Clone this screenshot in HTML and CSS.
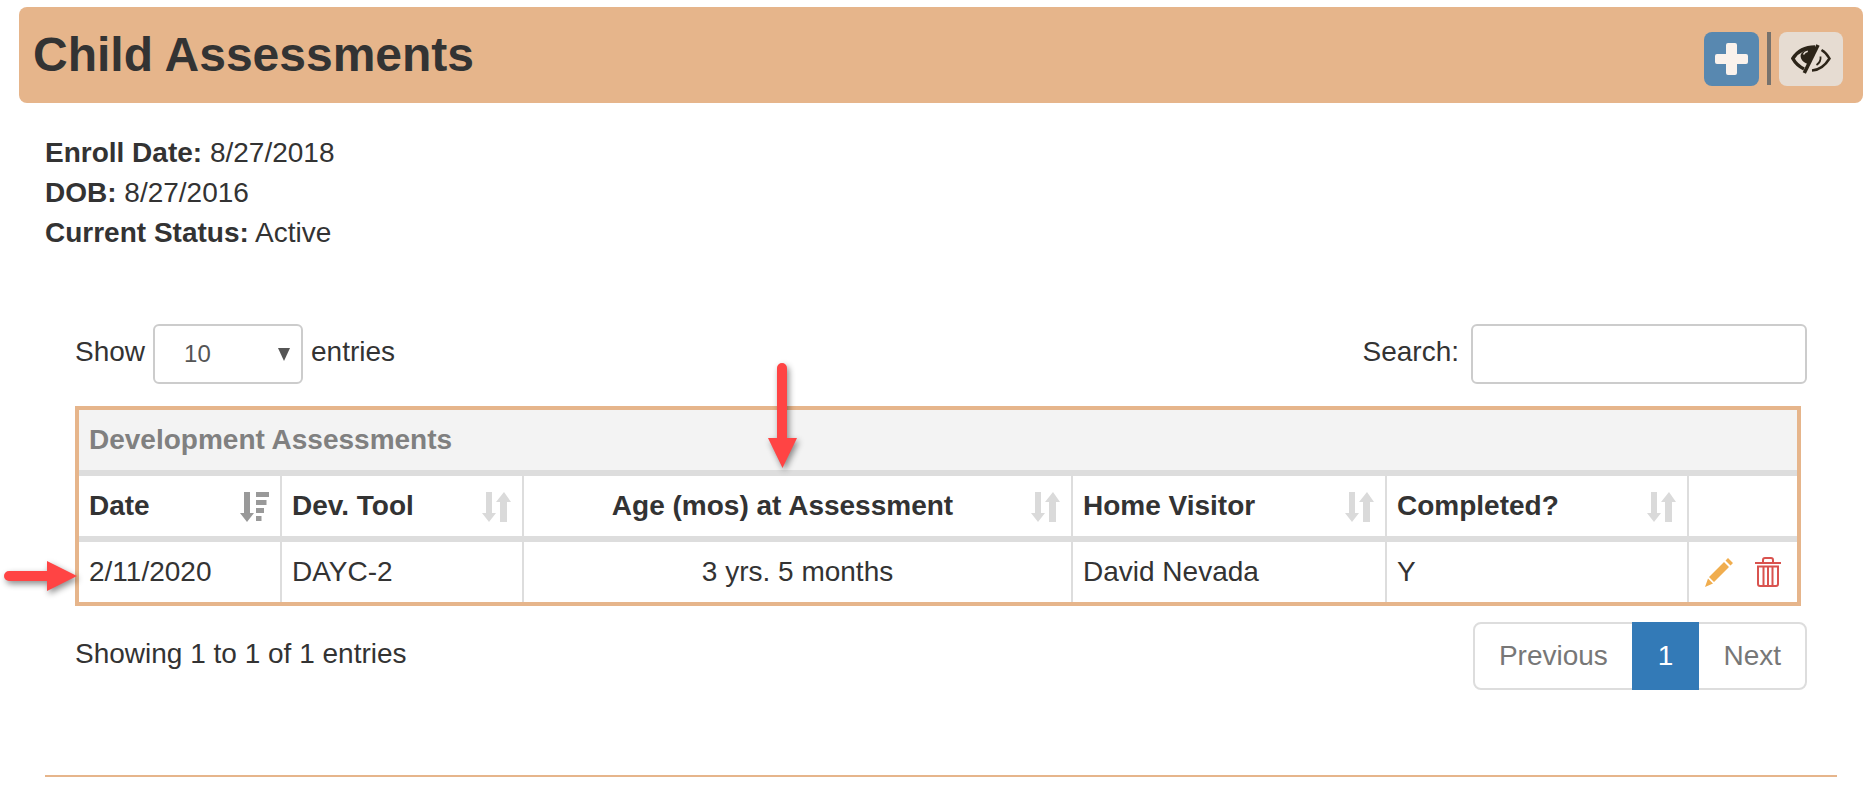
FILE: index.html
```html
<!DOCTYPE html>
<html lang="en">
<head>
<meta charset="utf-8">
<title>Child Assessments</title>
<link rel="stylesheet" href="styles.css">
</head>
<body>
<div class="page">
  <header class="banner">
    <h1 class="banner-title">Child Assessments</h1>
    <div class="banner-actions">
      <button class="action action-add" type="button" aria-label="Add">
        <svg class="plus-icon" viewBox="0 0 33 32"><path d="M13 0h7a2 2 0 0 1 2 2v9h9a2 2 0 0 1 2 2v6a2 2 0 0 1-2 2h-9v9a2 2 0 0 1-2 2h-7a2 2 0 0 1-2-2v-9H2a2 2 0 0 1-2-2v-6a2 2 0 0 1 2-2h9V2a2 2 0 0 1 2-2z"/></svg>
      </button>
      <span class="action-sep"></span>
      <button class="action action-hide" type="button" aria-label="Hide">
        <svg class="eye-icon" viewBox="0 0 40 30">
          <path class="eye-thick" d="M24 3C14 3 6 8 1.800 14.500 4 18.500 8 22.500 13 25"/>
          <path class="eye-fill" d="M9.700 11C11 7 17 3.500 24.500 3.500L17.300 20C12.500 19 9 15 9.700 11z"/>
          <path class="eye-glint" d="M12.500 10.500C13.200 9 14.800 7.800 16.800 7.300"/>
          <path class="eye-slash" d="M27 1 13.300 29"/>
          <path class="eye-outer" d="M21 26.500C29 26 34.500 21 38.500 14.500 36.500 11 34 8 30.500 6"/>
          <path class="eye-inner" d="M25.500 21C28.500 19 30 16.500 29.500 12.500"/>
        </svg>
      </button>
    </div>
  </header>

  <section class="info">
    <div><strong>Enroll Date:</strong> 8/27/2018</div>
    <div><strong>DOB:</strong> 8/27/2016</div>
    <div><strong>Current Status:</strong> Active</div>
  </section>

  <section class="dt">
    <div class="dt-controls">
      <div class="dt-length">
        <span>Show</span>
        <div class="select"><span class="select-value">10</span><span class="select-caret"></span></div>
        <span>entries</span>
      </div>
      <div class="dt-search">
        <span>Search:</span>
        <input class="search-input" type="text" aria-label="Search">
      </div>
    </div>

    <div class="table-frame">
      <table class="grid">
        <colgroup>
          <col class="c-date"><col class="c-tool"><col class="c-age"><col class="c-visitor"><col class="c-done"><col class="c-actions">
        </colgroup>
        <thead>
          <tr><th class="caption-cell" colspan="6">Development Assessments</th></tr>
          <tr>
            <th class="sortable">Date
              <svg class="sort sort-active" viewBox="0 0 29 30"><path d="M4 0h6v21h4l-7 9-7-9h4z"/><path d="M16 0h13v5H16zM16 8h10.500v5H16zM16 16h8v5h-8zM16 24h5.500v5H16z"/></svg>
            </th>
            <th class="sortable">Dev. Tool
              <svg class="sort" viewBox="0 0 29 30"><path d="M4 0h6v21h4l-7 9-7-9h4zM22 0l7 10h-4v20h-7V10h-4z"/></svg>
            </th>
            <th class="sortable centered">Age (mos) at Assessment
              <svg class="sort" viewBox="0 0 29 30"><path d="M4 0h6v21h4l-7 9-7-9h4zM22 0l7 10h-4v20h-7V10h-4z"/></svg>
            </th>
            <th class="sortable">Home Visitor
              <svg class="sort" viewBox="0 0 29 30"><path d="M4 0h6v21h4l-7 9-7-9h4zM22 0l7 10h-4v20h-7V10h-4z"/></svg>
            </th>
            <th class="sortable">Completed?
              <svg class="sort" viewBox="0 0 29 30"><path d="M4 0h6v21h4l-7 9-7-9h4zM22 0l7 10h-4v20h-7V10h-4z"/></svg>
            </th>
            <th class="last"></th>
          </tr>
        </thead>
        <tbody>
          <tr>
            <td>2/11/2020</td>
            <td>DAYC-2</td>
            <td class="centered">3 yrs. 5 months</td>
            <td>David Nevada</td>
            <td>Y</td>
            <td class="last">
              <div class="row-actions">
                <svg class="pencil" viewBox="0 0 28 29"><path d="M23 0l5 5-2.500 2.500-5-5zM19 4l5 5L9 24l-5-5zM3 20.500l5 5L0 29z"/></svg>
                <svg class="trash" viewBox="0 0 26 30">
                  <path class="trash-line" d="M0 6h26M8 6V3a2 2 0 0 1 2-2h6a2 2 0 0 1 2 2v3"/>
                  <path class="trash-line" d="M3 9.500h20V27a2 2 0 0 1-2 2H5a2 2 0 0 1-2-2zM8.500 10v18M13 10v18M17.500 10v18"/>
                </svg>
              </div>
            </td>
          </tr>
        </tbody>
      </table>
    </div>

    <div class="dt-footer">
      <div class="dt-info">Showing 1 to 1 of 1 entries</div>
      <nav class="pager">
        <a class="pager-item pager-first">Previous</a>
        <a class="pager-item pager-current">1</a>
        <a class="pager-item pager-last">Next</a>
      </nav>
    </div>
  </section>

  <hr class="rule">
</div>

<svg class="callout callout-down" viewBox="0 0 29 105"><path d="M9 5a5 5 0 0 1 10 0v70h10L14.500 105 0 75h9z"/></svg>
<svg class="callout callout-right" viewBox="0 0 73 30"><path d="M5 10h38V0l30 15-30 15V20H5a5 5 0 0 1 0-10z"/></svg>
</body>
</html>
```
FILE: styles.css
```css
* { box-sizing: border-box; }

html, body {
  margin: 0;
  background: #fff;
  overflow: hidden;
}

body {
  font-family: "Liberation Sans", Arial, sans-serif;
  font-size: 28px;
  line-height: 40px;
  color: #333;
  height: 801px;
}

.page {
  padding: 7px 10px 0 19px;
}

/* banner */
.banner {
  height: 96px;
  background: #e6b58b;
  border-radius: 8px;
  display: flex;
  align-items: flex-start;
  justify-content: space-between;
  padding: 25px 20px 0 14px;
}

.banner-title {
  margin: 0;
  font-size: 48px;
  line-height: 46px;
  font-weight: 700;
  color: #333;
}

.banner-actions {
  display: flex;
  gap: 8px;
  height: 54px;
}

.action {
  border: 0;
  padding: 0;
  height: 54px;
  border-radius: 8px;
  display: flex;
  align-items: center;
  justify-content: center;
}

.action-add { width: 55px; background: #5888b0; }
.action-hide { width: 64px; background: #e6dcd2; }

.action-sep {
  width: 4px;
  height: 53px;
  background: #77726d;
}

.plus-icon { width: 33px; height: 32px; fill: #faf2ec; }
.eye-icon { width: 40px; height: 30px; fill: none; stroke: #2c2418; }
.eye-thick { stroke-width: 3.400; }
.eye-outer { stroke-width: 2.500; }
.eye-inner { stroke-width: 1.800; }
.eye-slash { stroke-width: 3.600; }
.eye-fill { fill: #2c2418; stroke: none; }
.eye-glint { stroke: #e6dcd2; stroke-width: 1.600; }

/* summary */
.info {
  margin: 30px 0 0 26px;
}

.info strong { font-weight: 700; }

/* data table */
.dt {
  margin: 71px 0 0 56px;
  width: 1732px;
}

.dt-controls {
  display: flex;
  justify-content: space-between;
  height: 60px;
}

.dt-length,
.dt-search {
  display: flex;
  align-items: flex-start;
  gap: 8px;
}

.dt-length > span,
.dt-search > span {
  padding-top: 8px;
}

.dt-search { gap: 12px; }

.select {
  width: 150px;
  height: 60px;
  border: 2px solid #ccc;
  border-radius: 6px;
  display: flex;
  align-items: center;
  justify-content: space-between;
  padding: 0 11px 0 29px;
  font-size: 24px;
  color: #555;
}

.select-caret {
  width: 0;
  height: 0;
  border-left: 6px solid transparent;
  border-right: 6px solid transparent;
  border-top: 13px solid #555;
}

.search-input {
  width: 336px;
  height: 60px;
  border: 2px solid #ccc;
  border-radius: 6px;
  background: #fff;
  outline: 0;
}

.table-frame {
  margin-top: 22px;
  width: 1726px;
  border: 4px solid #e6b58b;
}

.grid {
  width: 100%;
  table-layout: fixed;
  border-collapse: separate;
  border-spacing: 0;
}

.c-date { width: 203px; }
.c-tool { width: 242px; }
.c-age { width: 549px; }
.c-visitor { width: 314px; }
.c-done { width: 302px; }
.c-actions { width: 108px; }

.grid th,
.grid td {
  padding: 10px;
  text-align: left;
  border-right: 2px solid #ddd;
  height: 60px;
}

.grid th {
  font-weight: 700;
  border-bottom: 6px solid #ddd;
  height: 66px;
}

.grid .last { border-right: 0; }
.grid .centered { text-align: center; }
.grid th.centered { padding-right: 40px; }

.grid .caption-cell {
  background: #f3f3f3;
  color: #808080;
  border-right: 0;
}

.sortable { position: relative; }

.sort {
  position: absolute;
  right: 11px;
  top: 16px;
  width: 29px;
  height: 30px;
  fill: #dadada;
}

.sort-active { fill: #999; }

.row-actions {
  display: flex;
  align-items: flex-start;
  gap: 22px;
  padding-left: 6px;
}

.pencil { width: 28px; height: 29px; fill: #f0ad4e; margin-top: 1px; }
.trash { width: 26px; height: 30px; fill: none; }
.trash-line { stroke: #d9534f; stroke-width: 2; }

.dt-footer {
  display: flex;
  justify-content: space-between;
  align-items: flex-start;
  margin-top: 16px;
}

.dt-info { padding-top: 12px; }

.pager {
  display: flex;
  height: 68px;
}

.pager-item {
  padding: 12px 24px;
  border: 2px solid #ddd;
  color: #777;
  margin-left: -2px;
  height: 68px;
}

.pager-first { border-radius: 8px 0 0 8px; margin-left: 0; }
.pager-last { border-radius: 0 8px 8px 0; }

.pager-current {
  background: #337ab7;
  border-color: #337ab7;
  color: #fff;
  position: relative;
}

.rule {
  margin: 85px 0 0 26px;
  width: 1792px;
  height: 2px;
  border: 0;
  background: #e6b58b;
}

/* annotation arrows laid over the screenshot */
.callout {
  position: absolute;
  fill: #ff4444;
  filter: drop-shadow(2px 3px 3px rgba(0, 0, 0, 0.45));
}

.callout-down {
  left: 768px;
  top: 363px;
  width: 29px;
  height: 105px;
}

.callout-right {
  left: 4px;
  top: 561px;
  width: 73px;
  height: 30px;
}
```
